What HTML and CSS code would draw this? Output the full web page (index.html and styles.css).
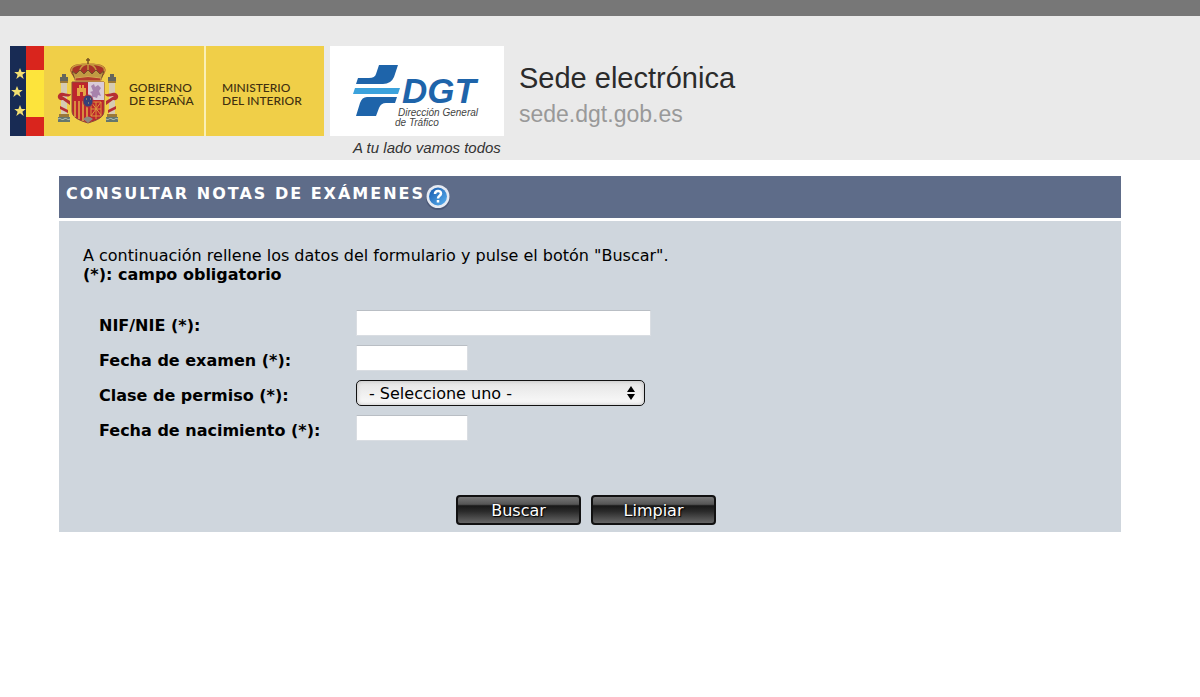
FILE: index.html
```html
<!DOCTYPE html>
<html lang="es">
<head>
<meta charset="utf-8">
<title>Consultar notas de exámenes</title>
<link rel="stylesheet" href="styles.css">
</head>
<body>
<div class="topbar"></div>
<header class="header">
  <div class="gov">
    <svg class="flags" viewBox="0 0 34 90" aria-hidden="true">
      <rect width="17" height="90" fill="#182b54"/>
      <rect x="16" width="18" height="25" fill="#d9251d"/>
      <rect x="16" y="24" width="18" height="47" fill="#fde43c"/>
      <rect x="16" y="71" width="18" height="19" fill="#d9251d"/>
      <g fill="#f2df72">
        <path id="star" d="M10 22l1.600 4h4.200l-3.400 2.700 1.300 4.200-3.700-2.600-3.700 2.600 1.300-4.200L4.200 26h4.200z"/>
        <use href="#star" x="-3" y="18"/>
        <use href="#star" y="37"/>
      </g>
    </svg>
    <div class="gov-name">
      <svg class="arms" viewBox="0 0 62 66" aria-hidden="true">
        <!-- columns -->
        <g id="column">
          <path d="M3 19h8v4H3zM5 16h4v3H5z" fill="#65665c"/>
          <path d="M4 25h6v34H4z" fill="#d6cbb2"/>
          <path d="M3 23h8v2H3zM2 56h10v3H2z" fill="#9b7938"/>
          <path d="M1 59h12v5H1z" fill="#65766d"/>
          <path d="M1 61c3-2 3 2 6 0s3 2 6 0" fill="none" stroke="#b8c6b9"/>
          <path d="M2 36c-3 3 0 7 4 6l7 5v-4l-8-5c3 0 8 2 9-2-5 1-8-3-12 0zM3 48l8 4v3l-8-4z" fill="#b62f32"/>
        </g>
        <use href="#column" transform="matrix(-1 0 0 1 62 0)"/>
        <!-- crown -->
        <path d="M17 19C7 8 20 5 31 6c11-1 24 2 14 13z" fill="#a83328"/>
        <g fill="none" stroke="#c4973d" stroke-width="1.500">
          <path d="M18 18C9 9 19 6 31 6s22 3 13 12M24 18c-3-6 0-11 7-12 7 1 10 6 7 12M31 6v12"/>
          <path d="M31 0v6M29 2h4" stroke="#775221"/>
        </g>
        <path d="M15 13l4 3 4-4 4 4 4-4 4 4 4-4 4 4 4-3-3 9H18z" fill="#c19a43" stroke="#76502b"/>
        <path d="M18 20q13-3 26 0v3H18z" fill="#b43d2d" stroke="#d3ac52"/>
        <!-- shield -->
        <path d="M15 24h32v29c0 6-6 9-16 12-10-3-16-6-16-12z" fill="#bd252d" stroke="#8c4d3c"/>
        <path d="M31 24h16v18H31z" fill="#d9cbd8"/>
        <path d="M34 28l3-2 1 3 3-2 3 3-2 3 2 5-3-1-1 3-3-1-3 1 1-4-2-2 3-1z" fill="#a783ac"/>
        <path d="M20 38V30h2v-3h2v3h1v-3h2v3h2v8h-3v-4h-3v4z" fill="#e5a444"/>
        <path d="M18 43v16M22 43v18M26 43v20M30 43v20" stroke="#e2ad46" stroke-width="1.500"/>
        <path d="M34 44l10 13M44 44L34 58M34 51h10M39 44v17M34 44h10v14H34z" fill="none" stroke="#dc963d"/>
        <path d="M26 61q5-5 10 0l-5 4z" fill="#8f8a80"/>
        <ellipse cx="31" cy="43" rx="5" ry="6" fill="#354078" stroke="#aa363e"/>
        <path d="M29 41h1M33 41h1M31 45h1" stroke="#d6b268"/>
      </svg>
      <span>GOBIERNO<br>DE ESPAÑA</span>
    </div>
    <div class="ministry">MINISTERIO<br>DEL INTERIOR</div>
  </div>
  <div class="dgt">
    <svg class="dgt-logo" viewBox="0 0 174 90" role="img" aria-label="DGT Dirección General de Tráfico">
      <path d="M49 19H68L64 31Q61 38 53 38H26L28 32H39Q45 32 46 28z" fill="#1e64aa"/>
      <path d="M25 42H70L68 48H23z" fill="#3ba2dc"/>
      <path d="M37 51H67L65 57H56Q51 57 49 62L46 70H26L30 57Q32 51 37 51z" fill="#1e64aa"/>
      <text class="dgt-letters" x="72" y="57">DGT</text>
      <text class="dgt-small" x="68" y="70">Dirección General</text>
      <text class="dgt-small" x="65" y="80">de Tráfico</text>
    </svg>
    <p class="tagline">A tu lado vamos todos</p>
  </div>
  <div class="site">
    <p class="site-name">Sede electrónica</p>
    <p class="site-url">sede.dgt.gob.es</p>
  </div>
</header>
<main class="main">
  <div class="titlebar">
    <h1 class="title">Consultar notas de exámenes</h1>
    <button class="help" type="button" aria-label="Ayuda">
      <svg viewBox="0 0 26 26" aria-hidden="true">
        <defs>
          <linearGradient id="blue" x2="1" y2="1"><stop stop-color="#1759ae"/><stop offset="1" stop-color="#5ab1ef"/></linearGradient>
        </defs>
        <circle cx="13" cy="14" r="12" fill="#3e4a69" opacity=".6"/>
        <circle cx="13" cy="12.500" r="11.500" fill="#e6eaf2"/>
        <circle cx="13" cy="12.500" r="9" fill="url(#blue)"/>
        <path d="M10 10c0-4 6-4 6-.5 0 2.500-3 2-3 5M13 16v2.500" fill="none" stroke="#fff" stroke-width="2.500"/>
      </svg>
    </button>
  </div>
  <form class="panel">
    <p class="intro">A continuación rellene los datos del formulario y pulse el botón "Buscar".<br><strong>(*): campo obligatorio</strong></p>
    <div class="fields">
      <label for="nif">NIF/NIE (*):</label>
      <input class="box wide" id="nif" type="text">
      <label for="examen">Fecha de examen (*):</label>
      <input class="box" id="examen" type="text">
      <label for="permiso">Clase de permiso (*):</label>
      <div class="picker">
        <select id="permiso"><option>- Seleccione uno -</option></select>
        <svg class="arrows" viewBox="0 0 8 14" aria-hidden="true"><path d="M4 0l4 6H0zM4 14l4-6H0z"/></svg>
      </div>
      <label for="nacimiento">Fecha de nacimiento (*):</label>
      <input class="box" id="nacimiento" type="text">
    </div>
    <div class="actions">
      <button class="action" type="submit">Buscar</button>
      <button class="action" type="reset">Limpiar</button>
    </div>
  </form>
</main>
</body>
</html>
```

FILE: styles.css
```css
* { box-sizing: border-box; }

body {
  margin: 0;
  background: #fff;
  color: #000;
  font: 16px/19px Verdana, "DejaVu Sans", sans-serif;
}

p, h1 { margin: 0; }

.topbar {
  height: 16px;
  background: #777;
}

.header {
  display: flex;
  align-items: flex-start;
  min-height: 144px;
  padding: 30px 10px 0;
  background: #eaeaea;
}

.gov {
  display: flex;
  height: 90px;
  margin-right: 6px;
  color: #3f2f10;
  font: 500 12px/13px Lato, sans-serif;
}

.flags { width: 34px; height: 90px; }

.gov-name {
  display: flex;
  align-items: center;
  gap: 10px;
  width: 160px;
  padding: 0 0 0 13px;
  background: #f0cf48;
}

.gov-name span { padding-top: 6px; }

.arms { width: 62px; height: 66px; }

.ministry {
  display: flex;
  align-items: center;
  width: 120px;
  padding: 6px 0 0 16px;
  border-left: 2px solid #faefb4;
  background: #f0cf48;
}

.dgt { width: 176px; }

.dgt-logo {
  display: block;
  width: 174px;
  height: 90px;
  background: #fff;
}

.dgt-letters {
  fill: #1e64aa;
  font: italic bold 35px "Liberation Sans", Arial, sans-serif;
}

.dgt-small {
  fill: #444;
  font: italic 10px "Liberation Sans", Arial, sans-serif;
}

.tagline {
  padding: 2px 0 0 23px;
  color: #333;
  font: italic 15px/19px "Liberation Sans", Arial, sans-serif;
  white-space: nowrap;
}

.site {
  padding: 14px 0 0 13px;
  font-family: "Liberation Sans Narrow", "Liberation Sans", Arial, sans-serif;
}

.site-name {
  color: #2b2b2b;
  font-size: 29px;
  line-height: 36px;
}

.site-url {
  color: #999;
  font-size: 23px;
  line-height: 36px;
}

.main { margin: 16px 79px 0 59px; }

.titlebar {
  display: flex;
  min-height: 42px;
  padding: 8px 7px;
  background: #5e6c89;
}

.title {
  color: #fff;
  font-size: 16px;
  line-height: 20px;
  letter-spacing: 2px;
  text-transform: uppercase;
}

.help {
  width: 26px;
  height: 26px;
  padding: 0;
  border: 0;
  background: none;
}

.help svg { display: block; }

.panel {
  margin-top: 3px;
  padding: 25px 24px 7px;
  background: #cfd6dd;
}

.fields {
  display: grid;
  grid-template-columns: 257px 1fr;
  grid-auto-rows: 25px;
  row-gap: 10px;
  padding: 26px 0 55px 16px;
}

.fields label {
  padding-top: 6px;
  font-weight: bold;
}

.box {
  width: 112px;
  height: 26px;
  padding: 2px 6px;
  border: 1px solid #d9dde2;
  border-top-color: #b9bec4;
  background: #fff;
  font: inherit;
}

.wide { width: 295px; }

.picker {
  position: relative;
  width: 289px;
}

.picker select {
  width: 100%;
  height: 26px;
  padding: 0 28px 0 12px;
  border: 1px solid #111;
  border-radius: 5px;
  appearance: none;
  background: linear-gradient(#e4e4e4, #fafafa);
  box-shadow: inset 0 0 4px #bbb;
  color: #000;
  font: inherit;
}

.arrows {
  position: absolute;
  top: 6px;
  right: 10px;
  width: 8px;
  height: 14px;
  pointer-events: none;
}

.actions {
  display: flex;
  justify-content: center;
  gap: 10px;
  padding-right: 8px;
}

.action {
  width: 125px;
  height: 30px;
  padding: 0;
  border: 2px solid #111;
  border-radius: 4px;
  background: linear-gradient(#777 0, #555 28%, #181818 34%, #2a2a2a 55%, #666 100%);
  color: #fff;
  font: inherit;
  text-shadow: 0 0 2px #000, 1px 1px 1px #000;
}
```
